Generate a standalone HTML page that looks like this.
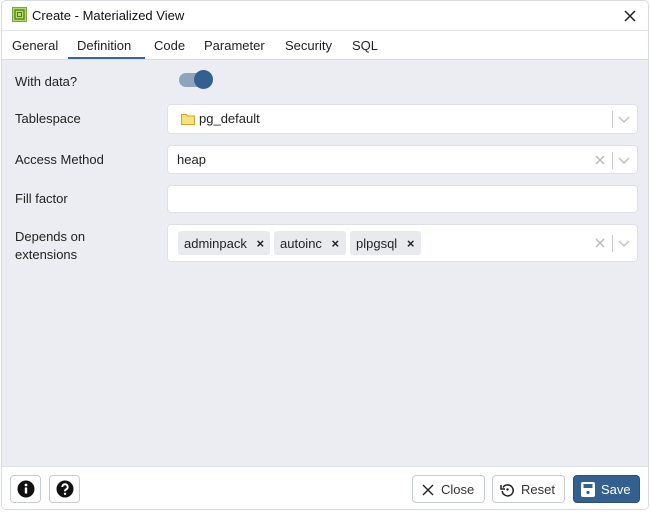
<!DOCTYPE html>
<html><head><style>
*{box-sizing:border-box;margin:0;padding:0}
body{width:650px;height:512px;background:#fff;font-family:"Liberation Sans",Arial,sans-serif;color:#222;position:relative;overflow:hidden;font-size:13px}
.dlg{position:absolute;left:1px;top:0px;width:648px;height:510px;border:1px solid #d8dbe2;border-radius:5px;overflow:hidden;background:#fff}
.abs{position:absolute}
.title{left:0;top:0;width:100%;height:30px;border-bottom:1px solid #e3e5ea}
.tabs{left:0;top:30px;width:100%;height:29px;border-bottom:1px solid #d8dbe2}
.tab{position:absolute;top:7px;font-size:13px;color:#222}
.body{left:0;top:59px;width:100%;height:406px;background:#ebedf2}
.lbl{position:absolute;left:13px;font-size:13px;color:#222}
.inp{position:absolute;left:165px;width:471px;background:#fff;border:1px solid #dde0e6;border-radius:4px}
.chip{position:absolute;top:6px;height:24px;background:#e8eaee;border-radius:3px;padding:5px 0 0 6px;font-size:13px}
.foot{left:0;top:465px;width:100%;height:44px;border-top:1px solid #dde0e6;background:#fff}
.btn{position:absolute;top:8px;height:28px;border:1px solid #c8ccd4;border-radius:4px;background:#fff;font-size:13px}
</style></head><body>
<div class="dlg">
<div class="abs title">
<svg class="abs" style="left:10px;top:6px" width="15" height="15" viewBox="0 0 15 15"><rect x="0.5" y="0.5" width="14" height="14" fill="#b6d96a" stroke="#7aa836"/><rect x="3" y="3" width="9" height="9" fill="none" stroke="#4e7f1e" stroke-width="1.3"/><rect x="5.5" y="5.5" width="4" height="4" fill="none" stroke="#4e7f1e"/></svg>
<div class="abs" style="left:30px;top:7px;font-size:13px;color:#111">Create - Materialized View</div>
<svg class="abs" style="left:622px;top:9px" width="12" height="12" viewBox="0 0 12 12"><path d="M1 1L11 11M11 1L1 11" stroke="#222" stroke-width="1.5"/></svg>
</div>
<div class="abs tabs">
<div class="tab" style="left:10px">General</div>
<div class="tab" style="left:75px">Definition</div>
<div class="abs" style="left:66px;top:26px;width:77px;height:2px;background:#3b6595"></div>
<div class="tab" style="left:152px">Code</div>
<div class="tab" style="left:202px">Parameter</div>
<div class="tab" style="left:283px">Security</div>
<div class="tab" style="left:350px">SQL</div>
</div>
<div class="abs body">
<div class="lbl" style="top:14px">With data?</div>
<div class="abs" style="left:177px;top:13px;width:30px;height:14px;border-radius:7px;background:#8ea3be"></div>
<div class="abs" style="left:192px;top:10px;width:19px;height:19px;border-radius:50%;background:#34608f"></div>
<div class="lbl" style="top:51px">Tablespace</div>
<div class="inp" style="top:44px;height:30px">
<svg class="abs" style="left:13px;top:8px" width="14" height="12" viewBox="0 0 14 12"><path d="M0.5 1.5h5l1 1.5h7v8.5h-13z" fill="#f5e27a" stroke="#c9a92c"/></svg>
<div class="abs" style="left:31px;top:6px">pg_default</div>
<div class="abs" style="left:444px;top:6px;width:1px;height:17px;background:#ccc"></div>
<svg class="abs" style="left:450px;top:11px" width="12" height="8" viewBox="0 0 12 8"><path d="M1 1l5 5 5-5" stroke="#bbb" stroke-width="1.3" fill="none"/></svg>
</div>
<div class="lbl" style="top:92px">Access Method</div>
<div class="inp" style="top:85px;height:29px">
<div class="abs" style="left:9px;top:6px">heap</div>
<svg class="abs" style="left:427px;top:9px" width="10" height="10" viewBox="0 0 10 10"><path d="M1 1l8 8M9 1l-8 8" stroke="#bbb" stroke-width="1.5"/></svg>
<div class="abs" style="left:444px;top:6px;width:1px;height:17px;background:#ccc"></div>
<svg class="abs" style="left:450px;top:11px" width="12" height="8" viewBox="0 0 12 8"><path d="M1 1l5 5 5-5" stroke="#bbb" stroke-width="1.3" fill="none"/></svg>
</div>
<div class="lbl" style="top:131px">Fill factor</div>
<div class="inp" style="top:125px;height:28px"></div>
<div class="lbl" style="top:168px;line-height:18px">Depends on<br>extensions</div>
<div class="inp" style="top:164px;height:38px">
<div class="chip" style="left:10px;width:92px">adminpack <b style="margin-left:6px">×</b></div>
<div class="chip" style="left:106px;width:72px">autoinc <b style="margin-left:6px">×</b></div>
<div class="chip" style="left:182px;width:71px">plpgsql <b style="margin-left:6px">×</b></div>
<svg class="abs" style="left:427px;top:13px" width="10" height="10" viewBox="0 0 10 10"><path d="M1 1l8 8M9 1l-8 8" stroke="#bbb" stroke-width="1.5"/></svg>
<div class="abs" style="left:444px;top:10px;width:1px;height:17px;background:#ccc"></div>
<svg class="abs" style="left:450px;top:15px" width="12" height="8" viewBox="0 0 12 8"><path d="M1 1l5 5 5-5" stroke="#bbb" stroke-width="1.3" fill="none"/></svg>
</div>
</div>
<div class="abs foot">
<div class="btn" style="left:8px;width:31px"><svg class="abs" style="left:6px;top:4px" width="18" height="18" viewBox="0 0 18 18"><circle cx="9" cy="9" r="8.5" fill="#111"/><rect x="7.8" y="7.5" width="2.4" height="6" fill="#fff"/><circle cx="9" cy="5" r="1.4" fill="#fff"/></svg></div>
<div class="btn" style="left:47px;width:31px"><svg class="abs" style="left:6px;top:4px" width="18" height="18" viewBox="0 0 18 18"><circle cx="9" cy="9" r="8.5" fill="#111"/><path d="M6.3 7a2.7 2.7 0 1 1 3.8 2.4c-.8.4-1.1.9-1.1 1.8" stroke="#fff" stroke-width="2" fill="none"/><circle cx="9" cy="13.8" r="1.2" fill="#fff"/></svg></div>
<div class="btn" style="left:410px;width:73px"><svg class="abs" style="left:9px;top:8px" width="12" height="12" viewBox="0 0 12 12"><path d="M1 1l10 10M11 1L1 11" stroke="#222" stroke-width="1.4"/></svg><span class="abs" style="left:28px;top:6px;color:#333">Close</span></div>
<div class="btn" style="left:490px;width:73px"><svg class="abs" style="left:7px;top:6px" width="15" height="15" viewBox="0 0 15 15"><path d="M3 5.5A5.5 5.5 0 1 1 2.2 9" stroke="#222" stroke-width="1.5" fill="none"/><path d="M1 3v4h4" stroke="#222" stroke-width="1.5" fill="none"/><circle cx="7.5" cy="7.5" r="1.2" fill="#222"/></svg><span class="abs" style="left:28px;top:6px;color:#333">Reset</span></div>
<div class="btn" style="left:571px;width:67px;background:#34608f;border-color:#2a5079"><svg class="abs" style="left:7px;top:6px" width="14" height="15" viewBox="0 0 14 15"><rect x="0" y="0" width="14" height="15" rx="2" fill="#fff"/><rect x="2.5" y="2" width="9" height="4" fill="#34608f"/><circle cx="7" cy="10.5" r="1.6" fill="#34608f"/></svg><span class="abs" style="left:27px;top:6px;color:#fff">Save</span></div>
</div>
</div>
</body></html>
